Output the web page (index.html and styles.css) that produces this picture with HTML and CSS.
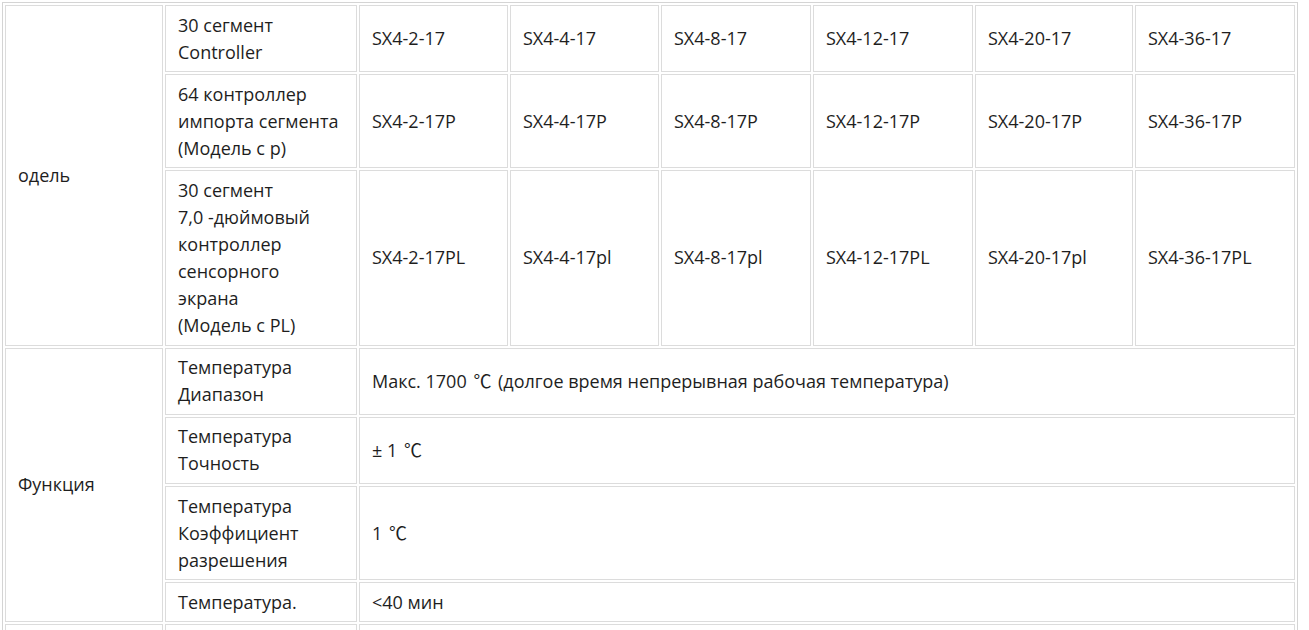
FILE: index.html
```html
<!DOCTYPE html>
<html lang="ru">
<head>
<meta charset="utf-8">
<title>Спецификация</title>
<link rel="stylesheet" href="styles.css">
</head>
<body>
<table class="spec">
  <colgroup>
    <col class="c1"><col class="c2"><col class="c3"><col class="c4"><col class="c5"><col class="c6"><col class="c7"><col class="c8">
  </colgroup>
  <tbody>
    <tr>
      <td rowspan="3">одель</td>
      <td>30 сегмент<br>Controller</td>
      <td>SX4-2-17</td><td>SX4-4-17</td><td>SX4-8-17</td><td>SX4-12-17</td><td>SX4-20-17</td><td>SX4-36-17</td>
    </tr>
    <tr>
      <td>64 контроллер<br>импорта сегмента<br>(Модель с p)</td>
      <td>SX4-2-17P</td><td>SX4-4-17P</td><td>SX4-8-17P</td><td>SX4-12-17P</td><td>SX4-20-17P</td><td>SX4-36-17P</td>
    </tr>
    <tr>
      <td>30 сегмент<br>7,0 -дюймовый<br>контроллер<br>сенсорного<br>экрана<br>(Модель с PL)</td>
      <td>SX4-2-17PL</td><td>SX4-4-17pl</td><td>SX4-8-17pl</td><td>SX4-12-17PL</td><td>SX4-20-17pl</td><td>SX4-36-17PL</td>
    </tr>
    <tr>
      <td rowspan="4">Функция</td>
      <td>Температура<br>Диапазон</td>
      <td colspan="6">Макс. 1700 <span class="deg">℃</span> (долгое время непрерывная рабочая температура)</td>
    </tr>
    <tr>
      <td>Температура<br>Точность</td>
      <td colspan="6">± 1 <span class="deg">℃</span></td>
    </tr>
    <tr>
      <td>Температура<br>Коэффициент<br>разрешения</td>
      <td colspan="6">1 <span class="deg">℃</span></td>
    </tr>
    <tr>
      <td>Температура.</td>
      <td colspan="6">&lt;40 мин</td>
    </tr>
    <tr>
      <td>Печь</td>
      <td>Материал</td>
      <td colspan="6">Волокно</td>
    </tr>
  </tbody>
</table>
</body>
</html>
```

FILE: styles.css
```css
html, body {
  margin: 0;
  padding: 0;
  background: #ffffff;
}

body {
  font-family: "Open Sans", "Noto Sans", "DejaVu Sans", sans-serif;
  font-size: 18px;
  color: #1e1e1e;
}

.spec {
  margin: 2px;
  width: 1296px;
  table-layout: fixed;
  border-collapse: separate;
  border-spacing: 2px;
  border: 1px solid #d4d4d4;
}

.spec td {
  border: 1px solid #dcdcdc;
  padding: 5.6px 12px;
  line-height: 27px;
  vertical-align: middle;
  text-align: left;
}

.c1 { width: 158px; }
.c2 { width: 192px; }
.c3 { width: 149px; }
.c4 { width: 149px; }
.c5 { width: 150px; }
.c6 { width: 160px; }
.c7 { width: 158px; }
.c8 { width: 160px; }

.deg {
  font-family: "Noto Sans CJK SC", "DejaVu Sans", sans-serif;
  font-size: 18px;
  line-height: 1;
  padding: 0 2px;
}
```
